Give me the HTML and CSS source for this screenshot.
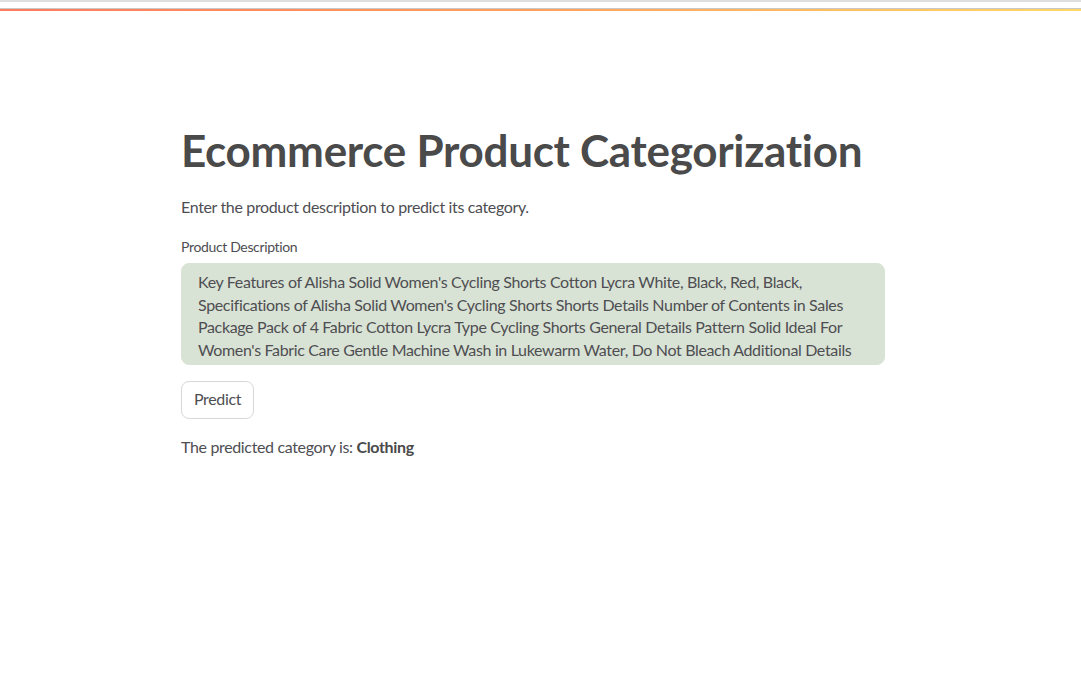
FILE: index.html
```html
<!DOCTYPE html>
<html lang="en">
<head>
<meta charset="utf-8">
<title>Ecommerce Product Categorization</title>
<link rel="stylesheet" href="styles.css">
</head>
<body>
<div class="chrome"></div>
<div class="decoration"></div>
<main class="main">
  <div class="block">
    <h1 class="title">Ecommerce Product Categorization</h1>
    <p class="intro">Enter the product description to predict its category.</p>
    <div class="field">
      <label class="label" for="desc">Product Description</label>
      <textarea id="desc" class="textarea">Key Features of Alisha Solid Women's Cycling Shorts Cotton Lycra White, Black, Red, Black, Specifications of Alisha Solid Women's Cycling Shorts Shorts Details Number of Contents in Sales Package Pack of 4 Fabric Cotton Lycra Type Cycling Shorts General Details Pattern Solid Ideal For Women's Fabric Care Gentle Machine Wash in Lukewarm Water, Do Not Bleach Additional Details Style Code ALTHT_3P_21 In the Box 4 shorts</textarea>
    </div>
    <div class="actions">
      <button class="btn" type="button">Predict</button>
    </div>
    <p class="result">The predicted category is: <strong>Clothing</strong></p>
  </div>
</main>
</body>
</html>
```

FILE: styles.css
```css
* { box-sizing: border-box; }
html, body { margin: 0; padding: 0; background: #ffffff; }
body {
  font-family: "Lato", "Liberation Sans", sans-serif;
  color: #4b4b4b;
  width: 1081px;
  min-height: 673px;
  overflow: hidden;
}
.chrome {
  height: 2px;
  background: #dedede;
}
.decoration {
  margin-top: 6px;
  height: 3px;
  border-top: 1px solid #c8c8c8;
  background: linear-gradient(90deg, #ff7a5e 0%, #ffa05e 50%, #ffd866 100%);
}
.main {
  display: flex;
  justify-content: flex-start;
  padding-left: 181px;
}
.block {
  width: 704px;
  padding-top: 107px;
  display: flex;
  flex-direction: column;
}
.title {
  margin: 0;
  font-size: 44px;
  font-weight: 700;
  line-height: 64px;
  color: #4a4a4a;
  letter-spacing: -0.3px;
}
.intro {
  margin: 13px 0 0;
  font-size: 16px;
  line-height: 24px;
  letter-spacing: -0.35px;
  color: #4e4e52;
}
.field {
  margin-top: 19px;
  display: flex;
  flex-direction: column;
}
.label {
  font-size: 14px;
  line-height: 18px;
  letter-spacing: -0.35px;
  color: #4e4e52;
  margin-bottom: 7px;
}
.textarea {
  display: block;
  width: 704px;
  height: 102px;
  background: #d9e3d5;
  border: 1px solid #d9e3d5;
  border-radius: 8px;
  padding: 7px 16px;
  font-family: inherit;
  font-size: 16px;
  line-height: 22.5px;
  letter-spacing: -0.35px;
  color: #4e4e52;
  resize: none;
  overflow: hidden;
  outline: none;
}
.actions {
  margin-top: 16px;
  display: flex;
}
.btn {
  height: 38px;
  padding: 0 12px 3px;
  background: #ffffff;
  border: 1px solid #d8d8d8;
  border-radius: 8px;
  font-family: inherit;
  font-size: 16px;
  letter-spacing: -0.35px;
  color: #4e4e52;
}
.result {
  margin: 16px 0 0;
  font-size: 16px;
  line-height: 24px;
  letter-spacing: -0.35px;
  color: #4e4e52;
}
.result strong { font-weight: 700; color: #4a4a4a; }
```
